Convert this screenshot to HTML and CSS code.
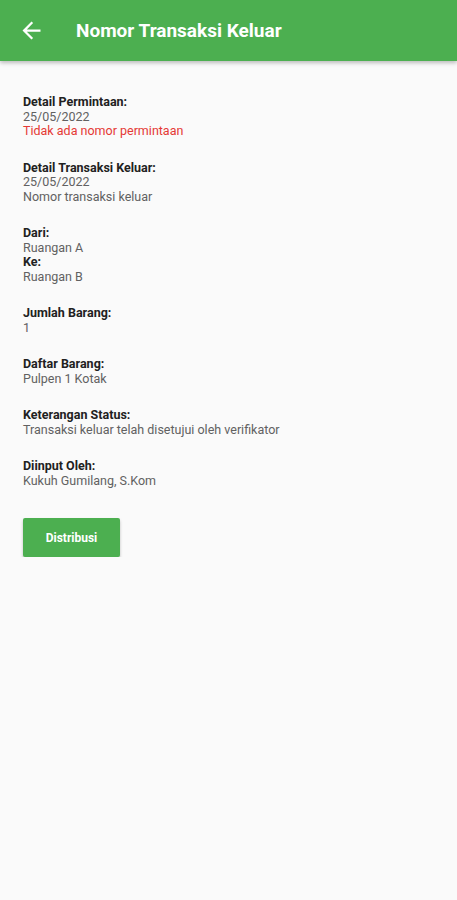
FILE: index.html
```html
<!DOCTYPE html>
<html lang="id">
<head>
    <meta charset="UTF-8">
    <meta name="viewport" content="width=device-width, initial-scale=1.0">
    <title>Nomor Transaksi Keluar</title>
    <link rel="stylesheet" href="styles.css">
</head>
<body>

    <div class="app-bar">
        <button class="back">
            <svg width="27" height="27" viewBox="0 0 24 24">
                <path d="M20 11H7.83l5.59-5.59L12 4l-8 8 8 8 1.41-1.41L7.83 13H20v-2z" fill="#fff"/>
            </svg>
        </button>
        <h1>Nomor Transaksi Keluar</h1>
    </div>

    <div class="content">
        <div class="block">
            <p class="label">Detail Permintaan:</p>
            <p class="value">25/05/2022</p>
            <p class="value red">Tidak ada nomor permintaan</p>
        </div>

        <div class="block">
            <p class="label">Detail Transaksi Keluar:</p>
            <p class="value">25/05/2022</p>
            <p class="value">Nomor transaksi keluar</p>
        </div>

        <div class="block">
            <p class="label">Dari:</p>
            <p class="value">Ruangan A</p>
            <p class="label">Ke:</p>
            <p class="value">Ruangan B</p>
        </div>

        <div class="block">
            <p class="label">Jumlah Barang:</p>
            <p class="value">1</p>
        </div>

        <div class="block">
            <p class="label">Daftar Barang:</p>
            <p class="value">Pulpen 1 Kotak</p>
        </div>

        <div class="block">
            <p class="label">Keterangan Status:</p>
            <p class="value">Transaksi keluar telah disetujui oleh verifikator</p>
        </div>

        <div class="block">
            <p class="label">Diinput Oleh:</p>
            <p class="value">Kukuh Gumilang, S.Kom</p>
        </div>

        <button class="distribusi">Distribusi</button>
    </div>

</body>
</html>
```

FILE: styles.css
```css
body {
    margin: 0;
    background-color: #fafafa;
    font-family: Roboto, "Liberation Sans", sans-serif;
}

.app-bar {
    height: 61px;
    background-color: #4caf50;
    display: flex;
    align-items: center;
    box-shadow: 0 2px 4px rgba(0, 0, 0, 0.25);
}

.app-bar .back {
    background: none;
    border: none;
    padding: 0;
    margin-left: 18px;
    width: 27px;
    height: 27px;
    display: flex;
}

.app-bar h1 {
    margin: 0 0 0 31px;
    color: white;
    font-size: 19px;
    font-weight: bold;
}

.content {
    padding: 34px 23px 0 23px;
}

.block {
    margin-bottom: 22px;
}

.block p {
    margin: 0;
    font-size: 12.5px;
    line-height: 14.5px;
}

.label {
    font-weight: bold;
    color: #212121;
}

.value {
    color: #616161;
}

.value.red {
    color: #e53935;
}

.distribusi {
    margin-top: 8px;
    width: 97px;
    height: 39px;
    border: none;
    border-radius: 2px;
    background-color: #4caf50;
    color: white;
    font-family: Roboto, "Liberation Sans", sans-serif;
    font-size: 12px;
    font-weight: bold;
    box-shadow: 0 2px 3px rgba(0, 0, 0, 0.25);
}
```
